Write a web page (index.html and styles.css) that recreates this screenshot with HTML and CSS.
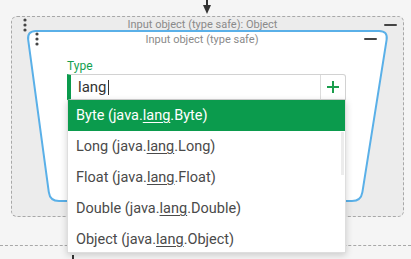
FILE: index.html
```html
<!DOCTYPE html>
<html>
<head>
	<meta charset="utf-8">
	<title>Input object</title>
	<link rel="stylesheet" href="styles.css">
</head>
<body>
	<div class="canvas">
		<svg class="flow-arrow" width="10" height="15" viewBox="0 0 10 15">
			<line x1="5" y1="0" x2="5" y2="8" stroke="#333" stroke-width="2"/>
			<polygon points="1,5 9,5 5,14" fill="#333"/>
		</svg>

		<div class="node outer">
			<div class="node-head">
				<svg class="grip" width="6" height="16" viewBox="0 0 6 16">
					<circle cx="3" cy="3" r="1.6"/>
					<circle cx="3" cy="8" r="1.6"/>
					<circle cx="3" cy="13" r="1.6"/>
				</svg>
				<span class="node-title">Input object (type safe): Object</span>
				<svg class="collapse" width="13" height="16" viewBox="0 0 13 16">
					<rect x="0" y="7" width="13" height="2" rx="1"/>
				</svg>
			</div>
		</div>

		<svg class="frame" width="411" height="259" viewBox="0 0 411 259">
			<path d="M 36 31 L 379 31 Q 388 31 386.6 39.9 L 362.4 192.1 Q 361 201 352 201 L 59 201 Q 50 201 48.8 192.1 L 28.2 39.9 Q 27 31 36 31 Z" fill="#fff" stroke="#5ab0e8" stroke-width="2"/>
		</svg>

		<div class="node inner">
			<div class="node-head">
				<svg class="grip" width="6" height="16" viewBox="0 0 6 16">
					<circle cx="3" cy="2" r="1.6"/>
					<circle cx="3" cy="7" r="1.6"/>
					<circle cx="3" cy="12" r="1.6"/>
				</svg>
				<span class="node-title">Input object (type safe)</span>
				<svg class="collapse" width="13" height="16" viewBox="0 0 13 16">
					<rect x="0" y="6" width="13" height="2" rx="1"/>
				</svg>
			</div>
			<div class="field">
				<label class="field-label">Type</label>
				<div class="field-input">
					<span class="field-text">lang<span class="caret"></span></span>
					<span class="field-add">
						<svg width="12" height="12" viewBox="0 0 12 12">
							<rect x="5" y="0" width="2" height="12"/>
							<rect x="0" y="5" width="12" height="2"/>
						</svg>
					</span>
				</div>
			</div>
		</div>

		<div class="lane"></div>
		<div class="link-stub"></div>

		<ul class="suggest">
			<li class="current">Byte (java.<u>lang</u>.Byte)</li>
			<li>Long (java.<u>lang</u>.Long)</li>
			<li>Float (java.<u>lang</u>.Float)</li>
			<li>Double (java.<u>lang</u>.Double)</li>
			<li>Object (java.<u>lang</u>.Object)</li>
			<li class="thumb"></li>
		</ul>
	</div>
</body>
</html>
```

FILE: styles.css
```css
*{
	margin: 0;
	padding: 0;
	box-sizing: border-box;
}
body{
	background: #f5f5f5;
	font-family: Roboto, "Liberation Sans", sans-serif;
	overflow: hidden;
}
.canvas{
	position: relative;
	width: 411px;
	height: 259px;
}
.flow-arrow{
	position: absolute;
	left: 202px;
	top: 0;
}
.node{
	position: absolute;
}
.outer{
	left: 11px;
	top: 16px;
	width: 393px;
	height: 201px;
	background: #ececec;
	border: 1px dashed #a8a8a8;
	border-radius: 6px;
}
.frame{
	position: absolute;
	left: 0;
	top: 0;
}
.inner{
	left: 27px;
	top: 32px;
	width: 362px;
}
.node-head{
	display: flex;
	align-items: flex-start;
	height: 16px;
}
.outer .node-head{
	padding: 0 6px 0 10px;
}
.inner .node-head{
	padding: 0 12px 0 7px;
}
.grip circle,
.collapse rect{
	fill: #444;
}
.node-title{
	flex: 1;
	text-align: center;
	font-size: 11px;
	line-height: 14px;
	padding-top: 1px;
	color: #8a8a8a;
	white-space: nowrap;
}
.outer .node-title{
	padding-right: 7px;
}
.field{
	margin: 11px 0 0 40px;
	width: 279px;
}
.field-label{
	display: block;
	font-size: 12px;
	line-height: 14px;
	color: #139f4f;
	margin-bottom: 1px;
}
.field-input{
	display: flex;
	height: 26px;
	background: #fff;
	border: 1px solid #d2d2d2;
	border-left: 4px solid #0b9b4d;
	border-radius: 0 3px 0 0;
}
.field-text{
	flex: 1;
	padding-left: 7px;
	font-size: 15px;
	line-height: 24px;
	color: #333;
}
.caret{
	display: inline-block;
	width: 1px;
	height: 15px;
	margin-left: 1px;
	vertical-align: -3px;
	background: #333;
}
.field-add{
	display: flex;
	align-items: center;
	justify-content: center;
	width: 25px;
	border-left: 1px solid #dcdcdc;
}
.field-add rect{
	fill: #1a9d4c;
}
.suggest{
	position: absolute;
	left: 67px;
	top: 100px;
	width: 279px;
	height: 153px;
	overflow: hidden;
	list-style: none;
	background: #fff;
	border: 1px solid #dedede;
	border-top: none;
	box-shadow: 0 2px 7px rgba(0,0,0,.18);
}
.suggest li{
	height: 31px;
	line-height: 31px;
	padding-left: 8px;
	font-size: 14.5px;
	color: #4a4a4a;
	white-space: nowrap;
}
.suggest li u{
	text-underline-offset: 2px;
}
.suggest li.current{
	background: #0b9b4d;
	color: #fff;
	margin-left: -1px;
	padding-left: 9px;
}
.suggest li.thumb{
	position: absolute;
	right: 1px;
	top: 32px;
	width: 3px;
	height: 43px;
	padding: 0;
	background: #ececec;
}
.lane{
	position: absolute;
	left: 0;
	right: 0;
	top: 245px;
	border-top: 1px dashed #a8a8a8;
}
.link-stub{
	position: absolute;
	left: 72px;
	top: 255px;
	width: 2px;
	height: 4px;
	background: #333;
}
```
